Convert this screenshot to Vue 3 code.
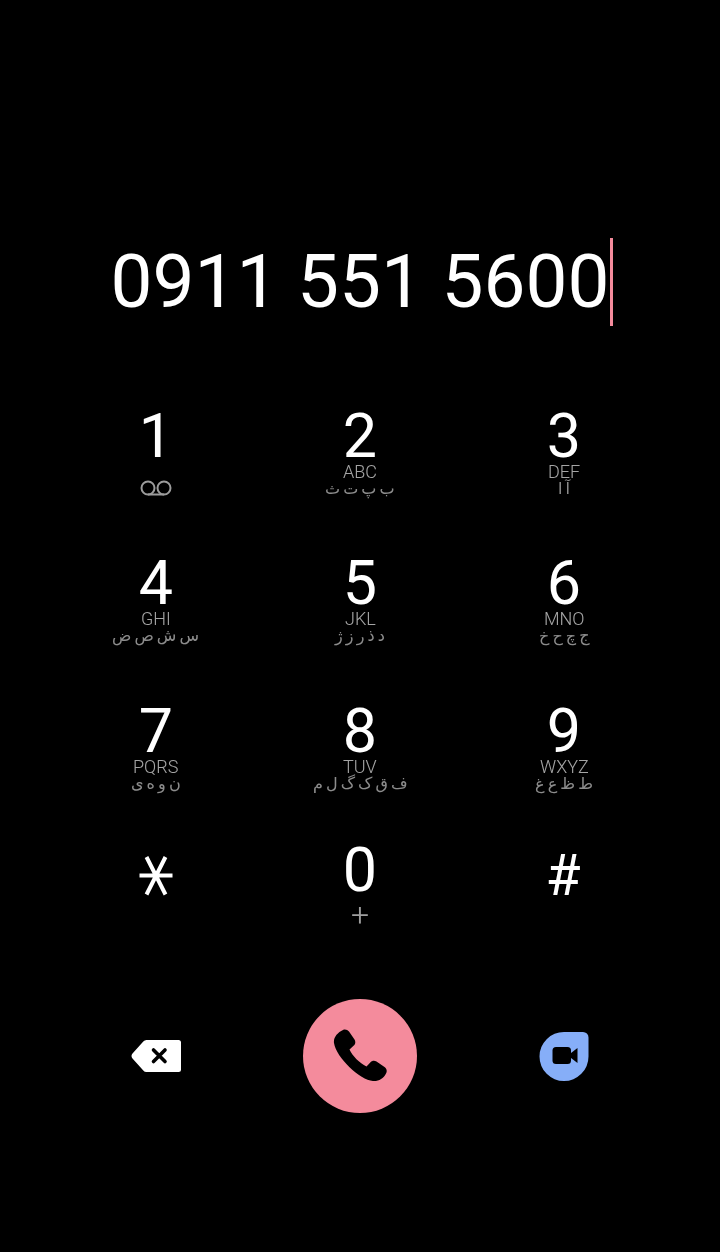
<script setup>
const keys = [
  { d: '1', icon: 'vm' },
  { d: '2', l: 'ABC', a: 'ب پ ت ث' },
  { d: '3', l: 'DEF', a: 'آ ا' },
  { d: '4', l: 'GHI', a: 'س ش ص ض' },
  { d: '5', l: 'JKL', a: 'د ذ ر ز ژ' },
  { d: '6', l: 'MNO', a: 'ج چ ح خ' },
  { d: '7', l: 'PQRS', a: 'ن و ه ی' },
  { d: '8', l: 'TUV', a: 'ف ق ک گ ل م' },
  { d: '9', l: 'WXYZ', a: 'ط ظ ع غ' },
  { star: true },
  { d: '0', plus: true },
  { d: '#', sym: true },
]
</script>

<template>
  <main class="dialer">
    <div class="display">
      <span class="number">0911 551 5600</span><span class="cursor"></span>
    </div>

    <section class="pad">
      <div v-for="(k, i) in keys" :key="i" class="key">
        <svg v-if="k.star" class="star" viewBox="0 0 34 40" aria-label="*">
          <path d="M0.5 19.5H33.5M7.500 1L26.500 38.500M26.500 1L7.500 38.500" fill="none" stroke="#fff" stroke-width="4" />
        </svg>
        <div v-else class="digit" :class="{ sym: k.sym }">{{ k.d }}</div>
        <svg v-if="k.icon" class="vm" viewBox="0 0 32 16">
          <circle cx="8" cy="8" r="6.500" fill="none" stroke="#9c9c9c" stroke-width="2" />
          <circle cx="24" cy="8" r="6.500" fill="none" stroke="#9c9c9c" stroke-width="2" />
          <path d="M8 14.500H24" stroke="#9c9c9c" stroke-width="2" />
        </svg>
        <div v-if="k.l" class="letters">{{ k.l }}</div>
        <div v-if="k.a" class="arabic" dir="rtl">{{ k.a }}</div>
        <div v-if="k.plus" class="plus">+</div>
      </div>
    </section>

    <section class="actions">
      <div class="action">
        <svg class="backspace" viewBox="0 0 50 32">
          <path d="M15.500 0H47.500a2.500 2.500 0 0 1 2.500 2.500V29.500a2.500 2.500 0 0 1-2.500 2.500H15.500a4 4 0 0 1-3.200-1.600L1.500 18.500a4 4 0 0 1 0-5L12.300 1.600A4 4 0 0 1 15.500 0Z" fill="#fff" />
          <path d="M22.500 10L34 21.500M34 10L22.500 21.500" stroke="#000" stroke-width="3.600" stroke-linecap="round" fill="none" />
        </svg>
      </div>
      <div class="action">
        <button class="call" aria-label="Call">
          <svg class="phone" viewBox="0 0 54 54">
            <path d="M10 1C12 0 14.500 0.800 16 2.500L21.500 10.500C22.800 12.500 22.500 15 20.800 16.500L16.500 20.500C19.500 27 26.500 34 33.500 37.500L37.500 33.200C39 31.500 41.500 31.200 43.500 32.500L51.500 38C53.500 39.500 54.500 42 53 44.500C50.500 49.500 45.500 52.500 40 52C27 51 3.500 29 1 14C0.200 8.500 4.500 3.500 10 1Z" fill="#000" />
          </svg>
        </button>
      </div>
      <div class="action">
        <svg class="duo" viewBox="0 0 50 50">
          <path d="M25 1H44A5.500 5.500 0 0 1 49.500 6.500V25.500A24.500 24.500 0 1 1 25 1Z" fill="#86aef8" />
          <rect x="13.500" y="16" width="18.500" height="17" rx="3.500" fill="#000" />
          <path d="M32 22L38.500 17V32L32 27Z" fill="#000" />
        </svg>
      </div>
    </section>
  </main>
</template>

<style scoped>
.dialer {
  width: 720px;
  height: 1252px;
  background: #000;
  overflow: hidden;
  color: #fff;
  font-family: Roboto, "DejaVu Sans", sans-serif;
}
.display {
  display: flex;
  justify-content: center;
  align-items: center;
  height: 88px;
  padding-top: 238px;
  padding-left: 4px;
}
.number {
  font-size: 74.7px;
  line-height: 88px;
  white-space: pre;
}
.cursor {
  width: 3px;
  height: 88px;
  background: #f48b9c;
  margin-left: 1px;
}
.pad {
  display: grid;
  grid-template-columns: repeat(3, 204px);
  grid-template-rows: 147px 148px 139px 140px;
  justify-content: center;
  margin-top: 81px;
}
.key {
  display: flex;
  flex-direction: column;
  align-items: center;
}
.digit {
  font-size: 61px;
  line-height: 55px;
  height: 55px;
  margin-top: 2px;
}
.sym {
  font-size: 57px;
  margin-top: 7px;
  margin-left: -2px;
}
.star {
  width: 34px;
  height: 40px;
  margin-top: 15px;
}
.vm {
  width: 32px;
  height: 16px;
  margin-top: 16px;
}
.letters {
  font-size: 18px;
  font-weight: 300;
  line-height: 16px;
  color: #fff;
  opacity: 0.65;
  will-change: transform;
}
.arabic {
  font-family: "DejaVu Sans", sans-serif;
  font-size: 16px;
  line-height: 16px;
  margin-top: 1px;
  word-spacing: -2px;
  color: #fff;
  opacity: 0.55;
  white-space: pre;
  will-change: transform;
}
.plus {
  font-size: 32px;
  font-weight: 300;
  line-height: 32px;
  margin-top: 1px;
  color: #fff;
  opacity: 0.62;
  will-change: transform;
}
.actions {
  display: grid;
  grid-template-columns: repeat(3, 204px);
  justify-content: center;
  margin-top: 18px;
  height: 114px;
}
.action {
  display: flex;
  align-items: center;
  justify-content: center;
}
.call {
  width: 114px;
  height: 114px;
  border: 0;
  padding: 0;
  border-radius: 50%;
  background: #f48b9c;
  display: flex;
  align-items: center;
  justify-content: center;
}
.phone {
  width: 54px;
  height: 54px;
}
.backspace {
  width: 50px;
  height: 32px;
}
.duo {
  width: 50px;
  height: 50px;
}
</style>
